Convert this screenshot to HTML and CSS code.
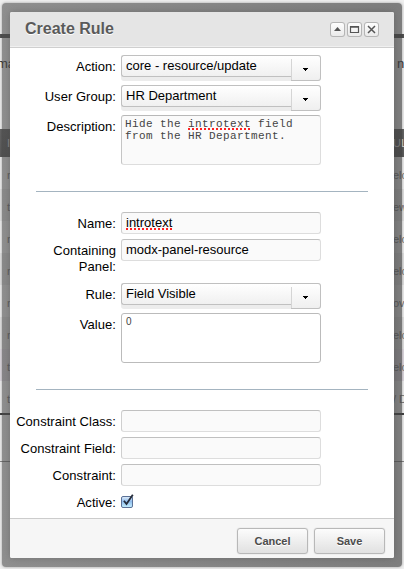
FILE: index.html
```html
<!DOCTYPE html>
<html lang="en">
<head>
<meta charset="utf-8">
<title>Create Rule</title>
<link rel="stylesheet" href="styles.css">
</head>
<body>
<div class="page">
  <div class="page-top"></div>
  <div class="page-intro"><span>ma</span><span>n</span></div>
  <div class="grid-head"><span>I</span><span>UL</span></div>
  <div class="grid-row"><span>r</span><span>elc</span></div>
  <div class="grid-row alt"><span>t</span><span>ew</span></div>
  <div class="grid-row"><span>r</span><span>elc</span></div>
  <div class="grid-row alt"><span>r</span><span>elc</span></div>
  <div class="grid-row"><span>r</span><span>ov</span></div>
  <div class="grid-row alt"><span>r</span><span>elc</span></div>
  <div class="grid-row hover"><span>t</span><span>elc</span></div>
  <div class="grid-row last"><span>t</span><span>/ D</span></div>
  <div class="page-bottom"></div>
</div>

<div class="frame">
  <div class="window">
    <div class="header">
      <h1>Create Rule</h1>
      <div class="tools">
        <span class="tool"><svg width="15" height="15" viewBox="0 0 15 15"><path d="M4 9L7.5 5L11 9Z" fill="#555"/></svg></span>
        <span class="tool"><svg width="15" height="15" viewBox="0 0 15 15"><path d="M3.500 4.500H11.500V10.500H3.500Z M3.500 5.200H11.500" fill="none" stroke="#555" stroke-width="1.200"/></svg></span>
        <span class="tool"><svg width="15" height="15" viewBox="0 0 15 15"><path d="M4 4L11 11M11 4L4 11" stroke="#555" stroke-width="1.500"/></svg></span>
      </div>
    </div>
    <div class="form">
      <div class="row combo-row"><label>Action:</label><div class="combo"><div class="combo-text">core - resource/update</div><div class="trigger"><svg width="5" height="3" viewBox="0 0 5 3"><path d="M0 0H5V1H4V2H3V3H2V2H1V1H0Z"/></svg></div></div></div>
      <div class="row combo-row"><label>User Group:</label><div class="combo"><div class="combo-text">HR Department</div><div class="trigger"><svg width="5" height="3" viewBox="0 0 5 3"><path d="M0 0H5V1H4V2H3V3H2V2H1V1H0Z"/></svg></div></div></div>
      <div class="row area-row"><label>Description:</label><div class="area">Hide the <span class="misspelt">introtext</span> field<br>from the HR Department.</div></div>
      <div class="rule"></div>
      <div class="row"><label>Name:</label><div class="input"><span class="misspelt">introtext</span></div></div>
      <div class="row two-line"><label>Containing<br>Panel:</label><div class="input">modx-panel-resource</div></div>
      <div class="row combo-row"><label>Rule:</label><div class="combo"><div class="combo-text">Field Visible</div><div class="trigger"><svg width="5" height="3" viewBox="0 0 5 3"><path d="M0 0H5V1H4V2H3V3H2V2H1V1H0Z"/></svg></div></div></div>
      <div class="row area-row"><label>Value:</label><div class="area plain">0</div></div>
      <div class="rule"></div>
      <div class="row"><label>Constraint Class:</label><div class="input"></div></div>
      <div class="row"><label>Constraint Field:</label><div class="input"></div></div>
      <div class="row"><label>Constraint:</label><div class="input"></div></div>
      <div class="row"><label>Active:</label>
        <svg class="check" width="14" height="15" viewBox="0 0 14 15">
          <defs><linearGradient id="aqua" x1="0" y1="0" x2="0" y2="1"><stop offset="0" stop-color="#e4effa"/><stop offset=".45" stop-color="#8fbcec"/><stop offset="1" stop-color="#c5f0ff"/></linearGradient></defs>
          <rect x=".5" y="2.500" width="11" height="11" rx="1.500" fill="url(#aqua)" stroke="#5b7196"/>
          <path d="M2.900 6.700L5.500 10L11.800 .8" fill="none" stroke="#252d3b" stroke-width="1.800"/>
        </svg>
      </div>
    </div>
    <div class="footer"><button>Cancel</button><button>Save</button></div>
  </div>
</div>
</body>
</html>
```
FILE: styles.css
```css
* { box-sizing: border-box; }
body {
  margin: 0;
  width: 404px;
  height: 569px;
  overflow: hidden;
  position: relative;
  background: #efefef;
  font-family: "Liberation Sans", Arial, sans-serif;
  font-size: 13px;
  color: #000;
}

/* Page under the dialog */
.page { height: 569px; color: #777; font-size: 11px; }
.page span { white-space: nowrap; }
.page > div { display: flex; justify-content: space-between; align-items: center; }
.page > div span:last-child { width: 11px; }
.page-top { height: 38px; border-bottom: 4px solid #555; }
.page-intro { height: 91px; padding-bottom: 41px; color: #333; font-size: 13px; }
.page-intro span:first-child { margin-left: -3px; }
.page > .page-intro span:last-child { width: 7px; }
.grid-head { height: 28px; padding-left: 7px; background: linear-gradient(#666, #5d5d5d); color: #ddd; }
.grid-row { height: 32px; padding-left: 7px; padding-top: 4px; background: #efefef; }
.grid-row.alt { background: #e2e2e2; }
.grid-row.hover { background: #ded9e0; }
.grid-row.last { height: 34px; border-bottom: 2px solid #444; }
.page-bottom { height: 47px; border-bottom: 1px solid #888; }

/* Dialog */
.frame {
  position: absolute;
  left: 2px;
  top: 3px;
  width: 400px;
  height: 564px;
  padding: 9px 8px;
  border-radius: 4px;
  background: linear-gradient(90deg, rgba(70,70,70,.57), rgba(62,62,62,.64));
  box-shadow: 0 0 3px rgba(0,0,0,.35);
}
.window {
  display: flex;
  flex-direction: column;
  width: 384px;
  height: 546px;
  background: #fff;
  border-radius: 2px;
  box-shadow: 0 0 7px rgba(70,70,70,.4);
  overflow: hidden;
}
.header {
  flex: none;
  height: 36px;
  padding: 0 15px;
  display: flex;
  align-items: center;
  justify-content: space-between;
  background: #e5e5e5;
  border-bottom: 1px solid #cfcfcf;
  box-shadow: inset 0 -1px #f0f0f0;
}
h1 {
  margin: 0 0 2px;
  font-size: 16px;
  line-height: 20px;
  color: #5a5a5a;
  text-shadow: 0 1px #fff;
}
.tools { display: flex; gap: 2px; }
.tool {
  width: 15px;
  height: 15px;
  border-radius: 3px;
  background: linear-gradient(#fff, #e9e9e9);
  box-shadow: inset 0 0 0 1px #b5b5b5;
}
.tool svg { display: block; }

.form { flex: 1; padding-top: 7px; }
.row {
  display: grid;
  grid-template-columns: 106px 200px;
  column-gap: 5px;
  align-items: start;
  height: 22px;
  margin-bottom: 5px;
}
.combo-row { height: 26px; margin-bottom: 4px; }
.area-row { height: 50px; margin-bottom: 26px; }
.two-line { height: 39px; }
.row label {
  padding-top: 4px;
  text-align: right;
  line-height: 16px;
  letter-spacing: .05px;
  white-space: nowrap;
}
.input {
  height: 22px;
  padding-left: 4px;
  border: 1px solid #ddd;
  border-top-color: #c0c0c0;
  border-left-color: #cfcfcf;
  border-radius: 3px;
  background: #fafafa;
  line-height: 19px;
}
.combo { display: flex; height: 26px; background: #ececec; border-radius: 3px; }
.combo-text {
  width: 170px;
  height: 22px;
  padding-left: 4px;
  border: 1px solid #c0c0c0;
  border-right: 0;
  border-radius: 3px 0 0 3px;
  background: linear-gradient(#fff, #f0f0f0);
  line-height: 19px;
}
.trigger {
  width: 30px;
  height: 26px;
  display: flex;
  align-items: center;
  justify-content: center;
  padding-top: 3px;
  border: 1px solid #c0c0c0;
  border-left: 0;
  border-radius: 0 3px 3px 0;
  background: linear-gradient(#d5d5d5, #d5d5d5) 0 3px / 1px 22px no-repeat, linear-gradient(#fff, #efefef);
}
.area {
  height: 50px;
  padding: 2px 3px;
  border: 1px solid #ddd;
  border-top-color: #b8b8b8;
  border-left-color: #c5c5c5;
  border-radius: 3px;
  background: #fafafa;
  color: #444;
  font: 11px/12px "Liberation Mono", "Courier New", monospace;
  letter-spacing: .4px;
  white-space: nowrap;
}
.area.plain {
  padding-left: 4px;
  border-color: #bbb;
  background: #fff;
  font: 10px/11px "Liberation Sans", Arial, sans-serif;
}
.misspelt {
  text-decoration: underline dotted #f22 2px;
  text-underline-offset: 1px;
  text-decoration-skip-ink: none;
}
.rule { width: 332px; height: 1px; margin: 0 0 20px 26px; background: #a4b4c0; }
.check { margin-top: 3px; }

.footer {
  flex: none;
  height: 40px;
  display: flex;
  justify-content: flex-end;
  gap: 6px;
  padding: 9px 9px 0 0;
  background: #f6f6f6;
  border-top: 1px solid #ccc;
}
button {
  width: 71px;
  height: 26px;
  padding: 0;
  border: 1px solid #b8b8b8;
  border-radius: 3px;
  background: linear-gradient(#fcfcfc, #e1e1e1);
  box-shadow: 0 0 1px #bbb;
  color: #4c4c4c;
  font: bold 11px/24px "Liberation Sans", Arial, sans-serif;
  text-shadow: 0 1px #fff;
}
```
